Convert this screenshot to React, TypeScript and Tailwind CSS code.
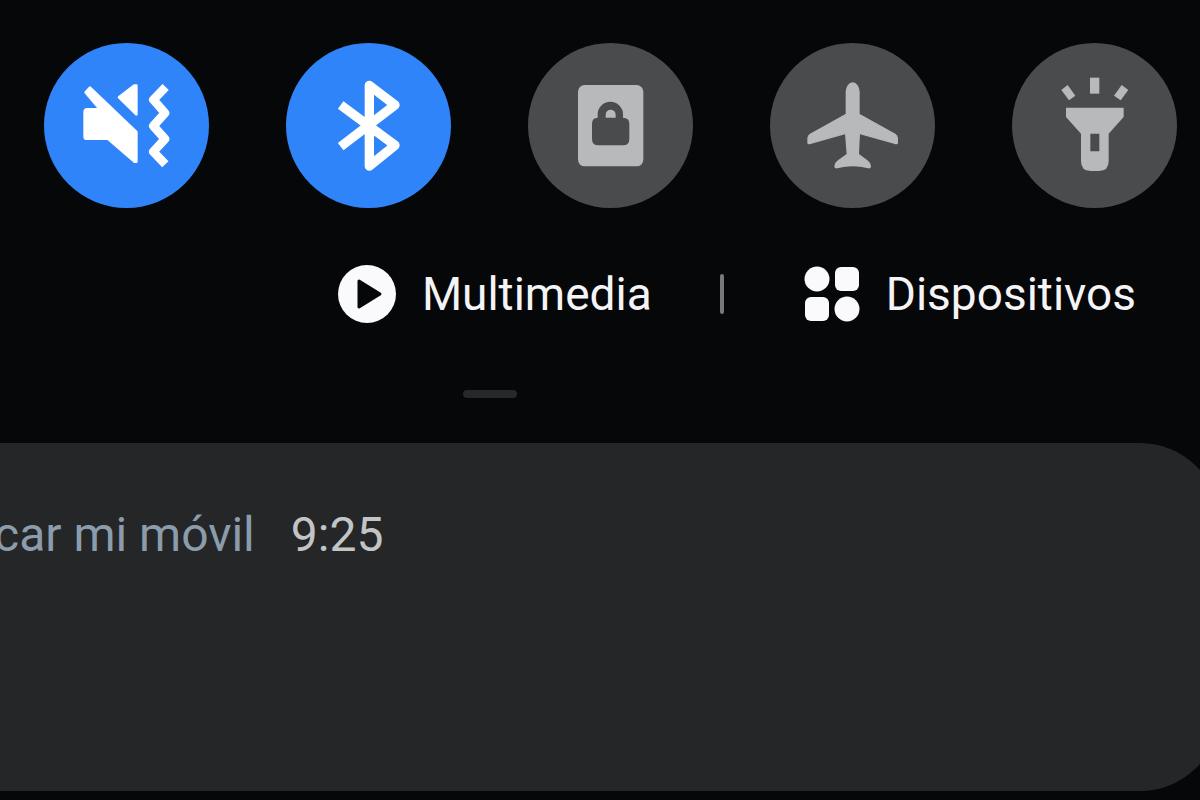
import { useState } from "react";
import type { ReactNode } from "react";

type Toggle = {
  id: string;
  label: string;
  active: boolean;
  icon: ReactNode;
};

const toggles: Toggle[] = [
  {
    id: "vibrate",
    label: "Vibrar",
    active: true,
    icon: (
      <>
        <g fill="currentColor" stroke="currentColor" strokeLinejoin="round">
          <path
            strokeWidth="8"
            d="M162 156 L301 289 V378 L296 378 L216 309 H152 Q146 309 146 303 V229 Q146 221 154 221 H192 L149 170 Z"
          />
          <path strokeWidth="8" d="M249 185 L295 150 H301 V236 Z" />
        </g>
        <path
          fill="none"
          stroke="currentColor"
          strokeWidth="26"
          strokeLinejoin="round"
          d="M389 154 L352 192 L387 232 L352 271 L387 310 L352 348 L388 386"
        />
      </>
    ),
  },
  {
    id: "bluetooth",
    label: "Bluetooth",
    active: true,
    icon: (
      <path
        fill="none"
        stroke="currentColor"
        strokeWidth="28"
        strokeLinejoin="round"
        d="M188 208 L351 329 L274 391 V149 L351 208 L188 333"
      />
    ),
  },
  {
    id: "rotation",
    label: "Bloqueo de rotación",
    active: false,
    icon: (
      <>
        <rect x="174" y="148" width="196" height="244" rx="20" fill="currentColor" />
        <path fill="#4a4b4c" d="M233 246 V236 A38 38 0 0 1 309 236 V246 Q328 246 328 264 V310 Q328 329 309 329 H235 Q216 329 216 310 V264 Q216 246 233 246 Z" />
        <path fill="currentColor" d="M257 246 V237 A15 15 0 0 1 287 237 V246 Z" />
      </>
    ),
  },
  {
    id: "airplane",
    label: "Modo avión",
    active: false,
    icon: (
      <path
        fill="currentColor"
        stroke="currentColor"
        strokeWidth="4"
        strokeLinejoin="round"
        d="M272 142 C283 142 290 155 291 168 V236 L399 296 Q405 300 406 307 V322 Q405 325 399 323 L292 293 L289 356 L316 376 Q325 383 325 391 Q325 397 319 396 Q272 384 225 396 Q219 397 219 391 Q219 383 228 376 L256 356 L251 293 L145 323 Q139 325 138 322 V307 Q139 300 145 296 L253 236 V168 C254 155 261 142 272 142 Z"
      />
    ),
  },
  {
    id: "torch",
    label: "Linterna",
    active: false,
    icon: (
      <g fill="currentColor">
        <rect x="258" y="126" width="28" height="48" />
        <path d="M172 163 L191 148 L214 180 L195 194 Z" />
        <path d="M353 148 L373 163 L350 194 L330 180 Z" />
        <path
          fillRule="evenodd"
          d="M186 216 H359 V244 L314 294 V377 Q314 406 285 406 H260 Q231 406 231 377 V294 L186 244 Z M259 294 V347 H286 V294 Z"
        />
      </g>
    ),
  },
];

function QuickToggle({ toggle }: { toggle: Toggle }) {
  const [on, setOn] = useState(toggle.active);

  return (
    <button
      type="button"
      aria-label={toggle.label}
      aria-pressed={on}
      onClick={() => setOn(!on)}
      className={
        on
          ? "size-[165px] shrink-0 rounded-full bg-[#3084f9] text-white"
          : "size-[165px] shrink-0 rounded-full bg-[#4a4b4c] text-[#b8b9ba]"
      }
    >
      <svg viewBox="24 22 495 495" className="size-full" aria-hidden="true">
        {toggle.icon}
      </svg>
    </button>
  );
}

function PlayIcon() {
  return (
    <svg viewBox="0 0 58 58" className="size-[58px]" aria-hidden="true">
      <circle cx="29" cy="29" r="29" fill="#fafafc" />
      <path
        d="M21 16 L42 29 L21 42 Z"
        fill="#060709"
        stroke="#060709"
        strokeWidth="3"
        strokeLinejoin="round"
      />
    </svg>
  );
}

function DevicesIcon() {
  return (
    <svg viewBox="0 0 56 56" className="size-14" fill="#fafafc" aria-hidden="true">
      <circle cx="13" cy="13" r="12.500" />
      <rect x="31" y="1" width="24" height="24" rx="6" />
      <rect x="1" y="31" width="24" height="24" rx="6" />
      <circle cx="43" cy="43" r="12.500" />
    </svg>
  );
}

export default function App() {
  return (
    <main className="min-h-screen overflow-hidden bg-[#060709] font-['Roboto',sans-serif]">
      {/* Quick settings */}
      <section className="flex justify-between pt-[43px] pr-[23px] pl-11">
        {toggles.map((toggle) => (
          <QuickToggle key={toggle.id} toggle={toggle} />
        ))}
      </section>

      {/* Media and devices shortcuts */}
      <nav className="mt-14 flex items-center justify-end pr-16 text-[46px] leading-[60px] text-[#f4f4f6]">
        <button type="button" className="flex items-center gap-[26px]">
          <PlayIcon />
          Multimedia
        </button>
        <span className="mr-20 ml-[68px] h-10 w-1 rounded-full bg-[#77787a]" />
        <button type="button" className="flex items-center gap-[26px]">
          <DevicesIcon />
          Dispositivos
        </button>
      </nav>

      {/* Drag handle */}
      <div className="mt-[66px] flex justify-center pr-[220px]">
        <span className="h-2 w-[54px] rounded-full bg-[#27282a]" />
      </div>

      {/* Notification, runs past both edges of the screen */}
      <article className="mt-[45px] -mr-5 mb-2 h-[348px] rounded-r-[80px] bg-[#252628] pt-16">
        <header className="flex gap-9 text-[48px] leading-14">
          <h2 className="-ml-1.5 text-[#8b9dac]">car mi móvil</h2>
          <time className="text-[#c3c4c5]">9:25</time>
        </header>
      </article>
    </main>
  );
}
